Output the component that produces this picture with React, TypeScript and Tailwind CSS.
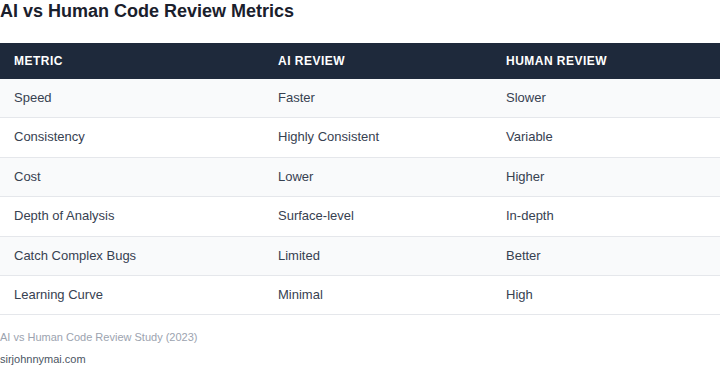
import React from "react";

const rows = [
  ["Speed", "Faster", "Slower"],
  ["Consistency", "Highly Consistent", "Variable"],
  ["Cost", "Lower", "Higher"],
  ["Depth of Analysis", "Surface-level", "In-depth"],
  ["Catch Complex Bugs", "Limited", "Better"],
  ["Learning Curve", "Minimal", "High"],
];

export default function App() {
  return (
    <div className="w-[720px] bg-white" style={{ fontFamily: '"Liberation Sans", Arial, sans-serif' }}>
      <h1 className="text-[18px] leading-[22px] font-bold text-[#1a202c] mb-[21px]">AI vs Human Code Review Metrics</h1>
      <div className="grid grid-cols-[264px_228px_228px] bg-[#1e293b] text-white text-[12px] leading-[14px] font-bold tracking-[0.04em]">
        <div className="px-[14px] py-[11px]">METRIC</div>
        <div className="px-[14px] py-[11px]">AI REVIEW</div>
        <div className="px-[14px] py-[11px]">HUMAN REVIEW</div>
      </div>
      {rows.map((r, i) => (
        <div
          key={i}
          className={`grid grid-cols-[264px_228px_228px] border-b border-[#e5e7eb] text-[13px] leading-[14.4px] text-[#374151] ${i % 2 === 0 ? "bg-[#f9fafb]" : "bg-white"}`}
        >
          {r.map((c, j) => (
            <div key={j} className="px-[14px] py-[12px]">{c}</div>
          ))}
        </div>
      ))}
      <div className="mt-[15px] text-[11px] leading-[14px] text-[#9ca3af]">AI vs Human Code Review Study (2023)</div>
      <div className="mt-[8px] text-[11px] leading-[14px] text-[#4b5563]">sirjohnnymai.com</div>
    </div>
  );
}
